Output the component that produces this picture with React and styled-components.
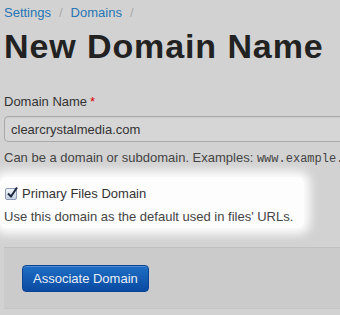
import React from "react";
import styled, { createGlobalStyle } from "styled-components";

const Global = createGlobalStyle`
  html, body {
    margin: 0;
    background: #d2d2d2;
    font-family: "Liberation Sans", Arial, sans-serif;
    color: #333;
    overflow: hidden;
  }
`;

const Page = styled.div`
  width: 340px;
  height: 315px;
  overflow: hidden;
  padding: 4px 0 0 4px;
  box-sizing: border-box;
`;

const Crumbs = styled.div`
  display: flex;
  font-size: 13px;
  line-height: 18px;
  white-space: nowrap;
`;

const Crumb = styled.a`
  color: #2675b5;
  text-decoration: none;
`;

const Divider = styled.span`
  color: #aaa;
  padding: 0 8px;
`;

const Title = styled.h1`
  margin: 4px 0 0;
  font-size: 34px;
  line-height: 40px;
  letter-spacing: 0.9px;
  font-weight: bold;
  color: #222;
  white-space: nowrap;
`;

const Field = styled.div`
  margin-top: 27px;
`;

const Label = styled.label`
  display: block;
  font-size: 13px;
  line-height: 18px;
  color: #333;
`;

const Required = styled.span`
  color: #d00;
  margin-left: 3px;
`;

const Input = styled.input`
  display: block;
  box-sizing: border-box;
  margin-top: 5px;
  width: 360px;
  height: 26px;
  padding: 0 6px;
  border: 1px solid #a9a9a9;
  border-radius: 4px;
  background: #d6d6d6;
  font-family: inherit;
  font-size: 13px;
  color: #333;
  box-shadow: inset 0 1px 1px rgba(0, 0, 0, 0.06);
`;

const Help = styled.p`
  margin: ${(p) => p.$top ?? 7}px 0 0;
  font-size: 13px;
  line-height: 18px;
  color: #444;
  white-space: nowrap;
`;

const Code = styled.code`
  font-family: "Liberation Mono", "Courier New", monospace;
  font-size: 12px;
`;

const Spot = styled.div`
  margin: 9px 0 0 -4px;
  padding: 8px 0 2px 4px;
  width: 300px;
  background: #fdfdfd;
  border-radius: 6px;
  box-shadow: 0 0 10px 6px #fdfdfd;
`;

const CheckRow = styled.label`
  display: flex;
  align-items: center;
  gap: 5px;
  font-size: 13px;
  line-height: 18px;
  color: #333;
`;

const Box = styled.span`
  position: relative;
  display: inline-block;
  box-sizing: border-box;
  width: 12px;
  height: 12px;
  margin-left: 1px;
  border: 1px solid #8c9bb2;
  border-radius: 2px;
  background: linear-gradient(#f2f5fa, #c5d1e3);
  svg {
    position: absolute;
    left: 0;
    top: -3px;
  }
`;

const Actions = styled.div`
  margin-top: 19px;
  height: 62px;
  box-sizing: border-box;
  padding: 17px 0 0 18px;
  background: #cbcbcb;
  border-top: 1px solid #c0c0c0;
  border-bottom: 1px solid #c6c6c6;
`;

const Button = styled.button`
  height: 27px;
  padding: 0 10px;
  border: 1px solid #0b4393;
  border-radius: 4px;
  background: linear-gradient(#1f6fc4, #0a4aa2);
  color: #e8eef8;
  font-family: inherit;
  font-size: 13px;
  box-shadow: inset 0 1px 0 rgba(255, 255, 255, 0.2);
`;

export default function App() {
  return (
    <>
      <Global />
      <Page>
        <Crumbs>
          <Crumb>Settings</Crumb>
          <Divider>/</Divider>
          <Crumb>Domains</Crumb>
          <Divider>/</Divider>
        </Crumbs>
        <Title>New Domain Name</Title>
        <Field>
          <Label>
            Domain Name<Required>*</Required>
          </Label>
          <Input defaultValue="clearcrystalmedia.com" />
          <Help>
            Can be a domain or subdomain. Examples: <Code>www.example.com</Code>
          </Help>
        </Field>
        <Spot>
          <CheckRow>
            <Box role="checkbox" aria-checked="true">
              <svg width="13" height="13" viewBox="0 0 13 13">
                <path d="M2 7.5 L5 10.5 L11 1.5" fill="none" stroke="#1c2740" strokeWidth="2" />
              </svg>
            </Box>
            Primary Files Domain
          </CheckRow>
          <Help $top={5}>Use this domain as the default used in files' URLs.</Help>
        </Spot>
        <Actions>
          <Button>Associate Domain</Button>
        </Actions>
      </Page>
    </>
  );
}
